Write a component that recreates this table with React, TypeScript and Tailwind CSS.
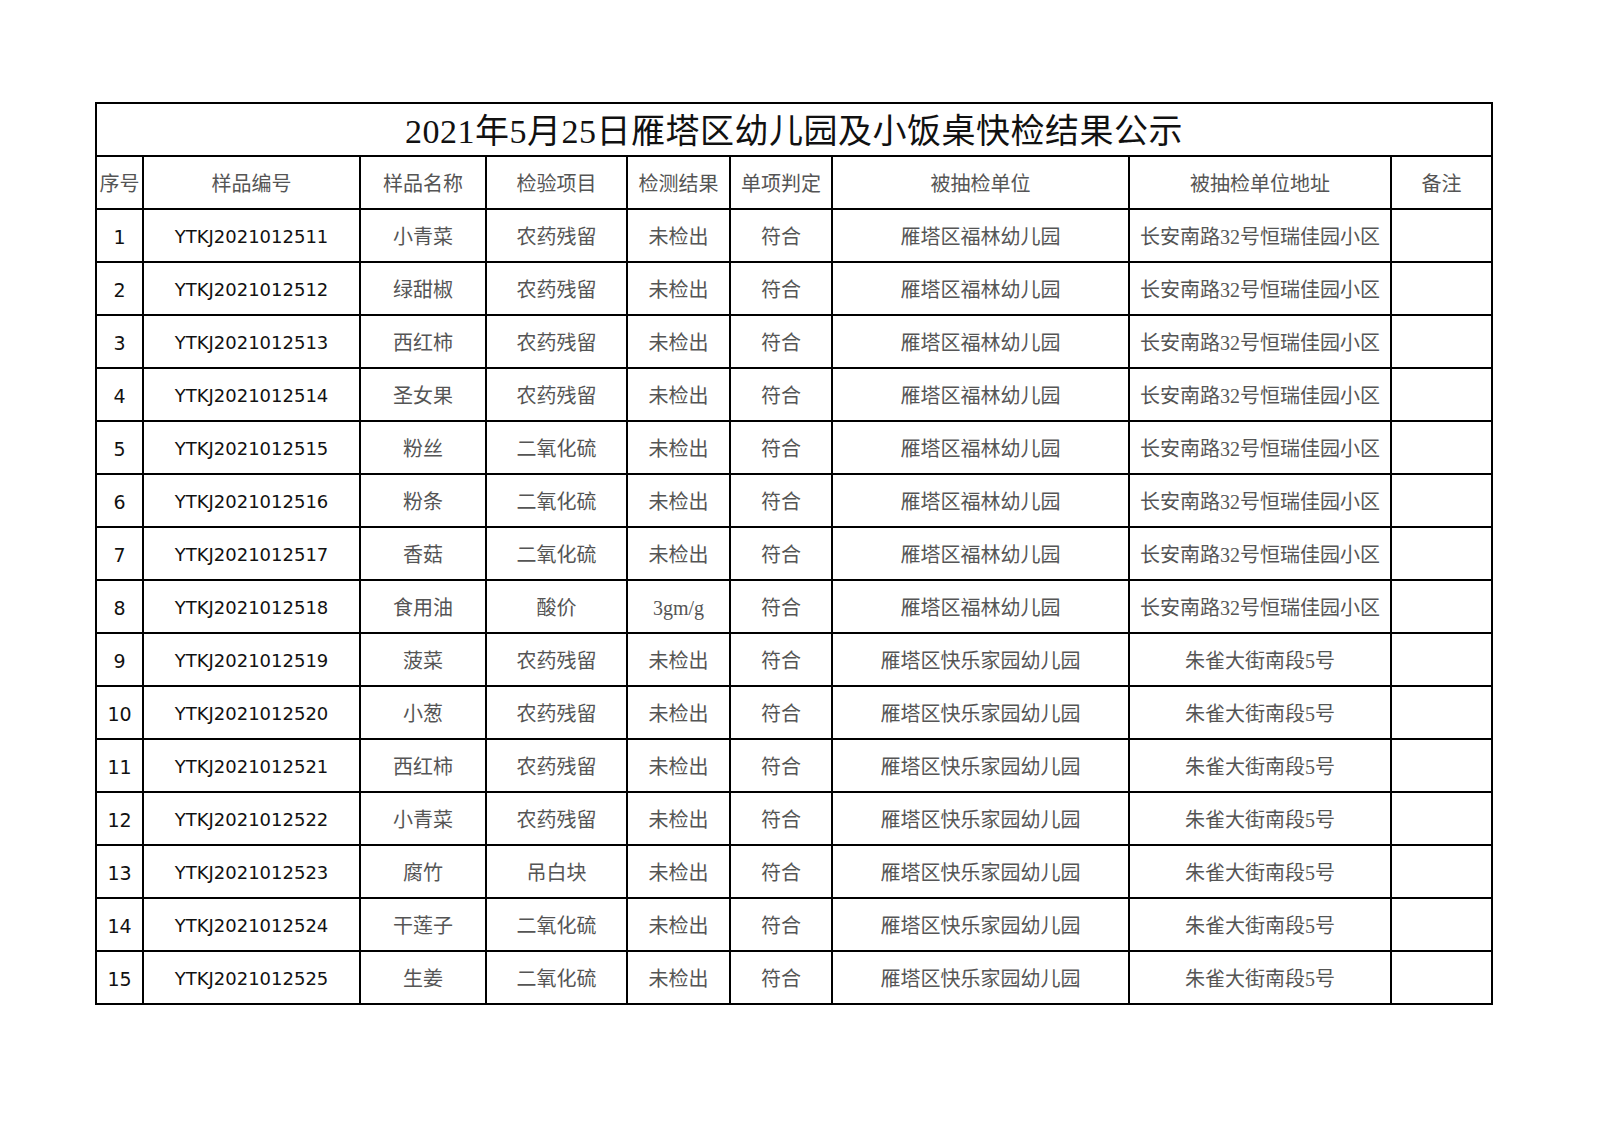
import React from "react";

const rows: [string, string, string, string, string, string, string, string][] = [
  ["1", "YTKJ2021012511", "小青菜", "农药残留", "未检出", "符合", "雁塔区福林幼儿园", "长安南路32号恒瑞佳园小区"],
  ["2", "YTKJ2021012512", "绿甜椒", "农药残留", "未检出", "符合", "雁塔区福林幼儿园", "长安南路32号恒瑞佳园小区"],
  ["3", "YTKJ2021012513", "西红柿", "农药残留", "未检出", "符合", "雁塔区福林幼儿园", "长安南路32号恒瑞佳园小区"],
  ["4", "YTKJ2021012514", "圣女果", "农药残留", "未检出", "符合", "雁塔区福林幼儿园", "长安南路32号恒瑞佳园小区"],
  ["5", "YTKJ2021012515", "粉丝", "二氧化硫", "未检出", "符合", "雁塔区福林幼儿园", "长安南路32号恒瑞佳园小区"],
  ["6", "YTKJ2021012516", "粉条", "二氧化硫", "未检出", "符合", "雁塔区福林幼儿园", "长安南路32号恒瑞佳园小区"],
  ["7", "YTKJ2021012517", "香菇", "二氧化硫", "未检出", "符合", "雁塔区福林幼儿园", "长安南路32号恒瑞佳园小区"],
  ["8", "YTKJ2021012518", "食用油", "酸价", "3gm/g", "符合", "雁塔区福林幼儿园", "长安南路32号恒瑞佳园小区"],
  ["9", "YTKJ2021012519", "菠菜", "农药残留", "未检出", "符合", "雁塔区快乐家园幼儿园", "朱雀大街南段5号"],
  ["10", "YTKJ2021012520", "小葱", "农药残留", "未检出", "符合", "雁塔区快乐家园幼儿园", "朱雀大街南段5号"],
  ["11", "YTKJ2021012521", "西红柿", "农药残留", "未检出", "符合", "雁塔区快乐家园幼儿园", "朱雀大街南段5号"],
  ["12", "YTKJ2021012522", "小青菜", "农药残留", "未检出", "符合", "雁塔区快乐家园幼儿园", "朱雀大街南段5号"],
  ["13", "YTKJ2021012523", "腐竹", "吊白块", "未检出", "符合", "雁塔区快乐家园幼儿园", "朱雀大街南段5号"],
  ["14", "YTKJ2021012524", "干莲子", "二氧化硫", "未检出", "符合", "雁塔区快乐家园幼儿园", "朱雀大街南段5号"],
  ["15", "YTKJ2021012525", "生姜", "二氧化硫", "未检出", "符合", "雁塔区快乐家园幼儿园", "朱雀大街南段5号"],
];

const headers = ["序号", "样品编号", "样品名称", "检验项目", "检测结果", "单项判定", "被抽检单位", "被抽检单位地址", "备注"];

const cjk = "font-['Liberation_Serif','Noto_Sans_CJK_SC',serif] text-[20px] text-[#555] pt-[3px]";
const sans = "font-['DejaVu_Sans','Noto_Sans_CJK_SC',sans-serif] text-[18px] text-[#111] pt-[3px]";
const cell = "bg-white h-[51px] flex items-center justify-center whitespace-nowrap overflow-hidden leading-none";

export default function App() {
  return (
    <div className="w-[1600px] h-[1131px] bg-white overflow-hidden">
      <div className="ml-[95px] mt-[102px] w-[1398px] grid grid-cols-[45px_215px_124px_139px_101px_100px_295px_260px_99px] gap-[2px] bg-black border-2 border-black">
        <div className={`${cell} col-span-9 font-['Liberation_Serif','Noto_Sans_CJK_SC',serif] text-[34px] font-normal text-[#111] pt-[5px] tracking-[0.5px]`}>
          2021年5月25日雁塔区幼儿园及小饭桌快检结果公示
        </div>
        {headers.map((h, i) => (
          <div key={"h" + i} className={`${cell} ${cjk}`}>
            {h}
          </div>
        ))}
        {rows.map((r, ri) => (
          <React.Fragment key={ri}>
            <div className={`${cell} ${sans} text-[19px]`}>{r[0]}</div>
            <div className={`${cell} ${sans}`}>{r[1]}</div>
            <div className={`${cell} ${cjk}`}>{r[2]}</div>
            <div className={`${cell} ${cjk}`}>{r[3]}</div>
            <div className={`${cell} ${cjk}`}>{r[4]}</div>
            <div className={`${cell} ${cjk}`}>{r[5]}</div>
            <div className={`${cell} ${cjk}`}>{r[6]}</div>
            <div className={`${cell} ${cjk} ${r[7].length > 10 ? "text-[19px]" : ""}`}>{r[7]}</div>
            <div className={`${cell}`}></div>
          </React.Fragment>
        ))}
      </div>
    </div>
  );
}
